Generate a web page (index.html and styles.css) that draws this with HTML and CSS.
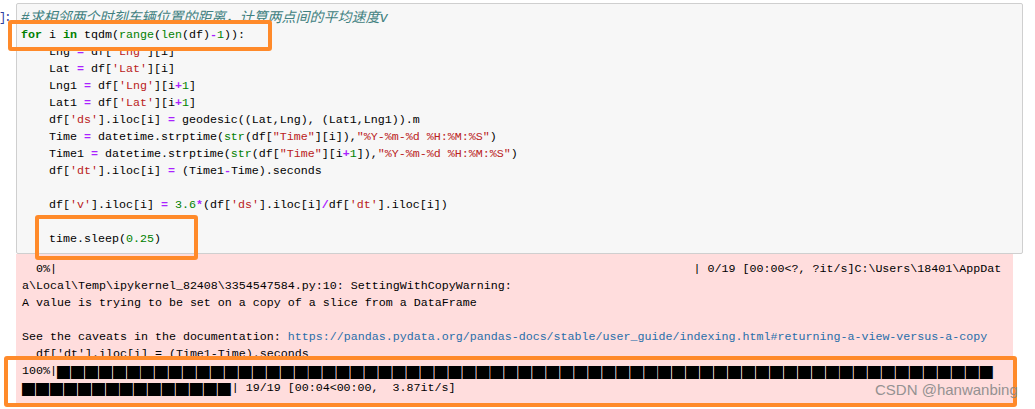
FILE: index.html
```html
<!DOCTYPE html>
<html lang="zh">
<head>
<meta charset="utf-8">
<title>Notebook cell</title>
<link rel="stylesheet" href="styles.css">
</head>
<body>
<div class="cell">
  <div class="prompt">]:</div>
  <div class="cell-body">
    <div class="input">
      <div class="code">
        <div class="ln"><span class="cm">#求相邻两个时刻车辆位置的距离，计算两点间的平均速度v</span></div>
        <div class="ln"><span class="kw">for</span> i <span class="kw">in</span> tqdm(<span class="bi">range</span>(<span class="bi">len</span>(df)<span class="op">-</span><span class="num">1</span>)):</div>
        <div class="ln">    Lng <span class="op">=</span> df[<span class="str">'Lng'</span>][i]</div>
        <div class="ln">    Lat <span class="op">=</span> df[<span class="str">'Lat'</span>][i]</div>
        <div class="ln">    Lng1 <span class="op">=</span> df[<span class="str">'Lng'</span>][i<span class="op">+</span><span class="num">1</span>]</div>
        <div class="ln">    Lat1 <span class="op">=</span> df[<span class="str">'Lat'</span>][i<span class="op">+</span><span class="num">1</span>]</div>
        <div class="ln">    df[<span class="str">'ds'</span>].iloc[i] <span class="op">=</span> geodesic((Lat,Lng), (Lat1,Lng1)).m</div>
        <div class="ln">    Time <span class="op">=</span> datetime.strptime(<span class="bi">str</span>(df[<span class="str">"Time"</span>][i]),<span class="str">"%Y-%m-%d %H:%M:%S"</span>)</div>
        <div class="ln">    Time1 <span class="op">=</span> datetime.strptime(<span class="bi">str</span>(df[<span class="str">"Time"</span>][i<span class="op">+</span><span class="num">1</span>]),<span class="str">"%Y-%m-%d %H:%M:%S"</span>)</div>
        <div class="ln">    df[<span class="str">'dt'</span>].iloc[i] <span class="op">=</span> (Time1<span class="op">-</span>Time).seconds</div>
        <div class="ln"></div>
        <div class="ln">    df[<span class="str">'v'</span>].iloc[i] <span class="op">=</span> <span class="num">3.6</span><span class="op">*</span>(df[<span class="str">'ds'</span>].iloc[i]<span class="op">/</span>df[<span class="str">'dt'</span>].iloc[i])</div>
        <div class="ln"></div>
        <div class="ln">    time.sleep(<span class="num">0.25</span>)</div>
      </div>
    </div>
    <div class="output">
      <div class="stderr">
        <div class="ln">  0%|                                                                                           | 0/19 [00:00&lt;?, ?it/s]C:\Users\18401\AppDat</div>
        <div class="ln">a\Local\Temp\ipykernel_82408\3354547584.py:10: SettingWithCopyWarning:</div>
        <div class="ln">A value is trying to be set on a copy of a slice from a DataFrame</div>
        <div class="ln"></div>
        <div class="ln">See the caveats in the documentation: <a class="link" href="#">https://pandas.pydata.org/pandas-docs/stable/user_guide/indexing.html#returning-a-view-versus-a-copy</a></div>
        <div class="ln">  df['dt'].iloc[i] = (Time1-Time).seconds</div>
        <div class="ln">100%|<span class="blk">███████████████████████████████████████████████████████████████████</span></div>
        <div class="ln"><span class="blk">███████████████</span>| 19/19 [00:04&lt;00:00,  3.87it/s]</div>
      </div>
    </div>
  </div>
</div>

<div class="mark mark-for"></div>
<div class="mark mark-sleep"></div>
<div class="mark mark-bar"></div>
<div class="watermark">CSDN @hanwanbing</div>
</body>
</html>
```

FILE: styles.css
```css
html, body {
  margin: 0;
  padding: 0;
  background: #ffffff;
}

body {
  width: 1035px;
  height: 409px;
  overflow: hidden;
  position: relative;
  font-family: "Liberation Mono", "Noto Sans CJK SC", monospace;
}

.cell {
  display: flex;
  align-items: flex-start;
  padding-top: 3px;
}

.prompt {
  width: 16px;
  flex: none;
  box-sizing: border-box;
  padding-top: 7px;
  font-size: 12px;
  line-height: 17px;
  color: #303f9f;
  letter-spacing: -2px;
  text-indent: -1px;
  white-space: nowrap;
}

.cell-body {
  display: flex;
  flex-direction: column;
  width: 1007px;
}

.input {
  border: 1px solid #cfcfcf;
  border-radius: 2px;
  background: #f7f7f7;
  padding: 6px 4px 5px 4px;
}

.code,
.stderr {
  font-family: "Liberation Mono", "Noto Sans CJK SC", monospace;
  font-size: 11.67px;
  line-height: 17px;
  color: #000;
}

.ln {
  height: 17px;
  white-space: pre;
  overflow: visible;
}

.cm {
  color: #408080;
  font-style: italic;
  font-size: 14px;
  line-height: 17px;
  vertical-align: top;
}

.kw {
  color: #008000;
  font-weight: bold;
}

.bi,
.num {
  color: #008000;
}

.op {
  color: #aa22ff;
  font-weight: bold;
}

.str {
  color: #ba2121;
}

.output {
  width: 997px;
  box-sizing: border-box;
  background: #ffdddd;
  padding: 7px 6px 10px 6px;
}

.link {
  color: #296eaa;
  text-decoration: none;
}

.blk {
  font-family: "Noto Sans CJK SC", monospace;
  font-size: 13px;
  line-height: 17px;
  vertical-align: top;
  letter-spacing: 0.98px;
  color: #000;
}

.mark {
  position: absolute;
  border: 4px solid #ff8a2a;
  border-radius: 3px;
  box-sizing: border-box;
  pointer-events: none;
}

.mark-for {
  left: 8px;
  top: 20px;
  width: 264px;
  height: 31px;
}

.mark-sleep {
  left: 35px;
  top: 215px;
  width: 163px;
  height: 45px;
}

.mark-bar {
  left: 4px;
  top: 356px;
  width: 1013px;
  height: 51px;
}

.watermark {
  position: absolute;
  left: 875px;
  top: 381px;
  font-family: "Liberation Sans", Arial, sans-serif;
  font-size: 15px;
  line-height: 18px;
  color: #8a8a8a;
  opacity: 0.9;
  white-space: nowrap;
}
```
